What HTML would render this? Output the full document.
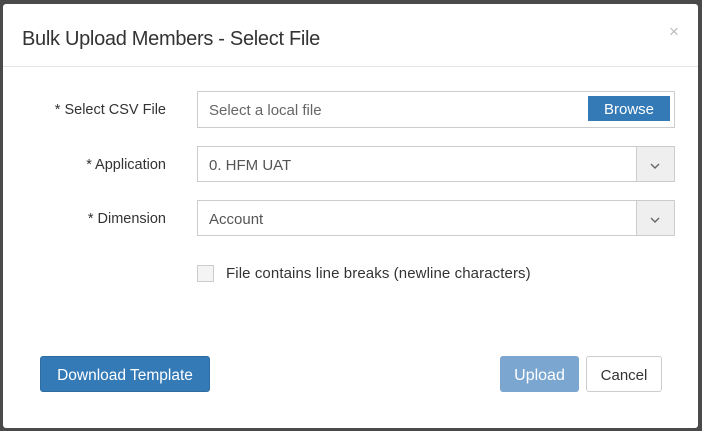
<!DOCTYPE html>
<html><head><style>
body{margin:0;width:702px;height:431px;background:#4a4a4a;position:relative;overflow:hidden;font-family:"Liberation Sans",sans-serif;}
.dlg{position:absolute;left:3px;top:4px;width:695px;height:424px;background:#fff;border-radius:3px;}
.abs{position:absolute;white-space:nowrap;}
.title{left:19px;top:24px;font-size:20px;color:#333;letter-spacing:-0.3px}
.x{left:666px;top:18px;font-size:17px;color:#bbb}
.hr{left:0;top:62px;width:695px;height:1px;background:#e5e5e5}
.lbl{font-size:14.5px;color:#333;text-align:right;width:163px;left:0}
.inp{border:1px solid #ccc;background:#fff;box-sizing:border-box;font-size:15px;color:#555;}
.btn{box-sizing:border-box;font-size:15px;text-align:center;border-radius:3px;}
</style></head><body>
<div class="dlg">
<div class="abs title">Bulk Upload Members - Select File</div>
<div class="abs x">×</div>
<div class="abs hr"></div>
<div class="abs lbl" style="top:98px">* Select CSV File</div>
<div class="abs inp" style="left:194px;top:87px;width:478px;height:37px;padding:10px 11px 0;color:#666">Select a local file</div>
<div class="abs btn" style="left:585px;top:92px;width:82px;height:25px;line-height:27px;background:#337ab7;color:#fff;border-radius:0">Browse</div>
<div class="abs lbl" style="top:153px">* Application</div>
<div class="abs inp" style="left:194px;top:142px;width:478px;height:36px;padding:10px 11px 0">0. HFM UAT</div>
<div class="abs" style="left:633px;top:143px;width:38px;height:34px;background:#efefef;border-left:1px solid #ccc;box-sizing:border-box"></div>
<svg class="abs" style="left:646px;top:158px" width="12" height="8"><path d="M2 2 L6 6 L10 2" stroke="#666" stroke-width="1.4" fill="none"/></svg>
<div class="abs lbl" style="top:207px">* Dimension</div>
<div class="abs inp" style="left:194px;top:196px;width:478px;height:36px;padding:10px 11px 0">Account</div>
<div class="abs" style="left:633px;top:197px;width:38px;height:34px;background:#efefef;border-left:1px solid #ccc;box-sizing:border-box"></div>
<svg class="abs" style="left:646px;top:212px" width="12" height="8"><path d="M2 2 L6 6 L10 2" stroke="#666" stroke-width="1.4" fill="none"/></svg>
<div class="abs" style="left:194px;top:261px;width:17px;height:17px;border:1px solid #ccc;box-sizing:border-box;background:#f4f4f4"></div>
<div class="abs" style="left:223px;top:261px;font-size:15px;color:#333;letter-spacing:0.1px">File contains line breaks (newline characters)</div>
<div class="abs btn" style="left:37px;top:352px;width:170px;height:36px;line-height:37px;background:#337ab7;color:#fff;border:1px solid #2e6da4;font-size:15.5px">Download Template</div>
<div class="abs btn" style="left:497px;top:352px;width:79px;height:36px;line-height:39px;background:#7aa6cf;color:#fff;font-size:16px">Upload</div>
<div class="abs btn" style="left:583px;top:352px;width:76px;height:36px;line-height:37px;background:#fff;color:#333;border:1px solid #ccc">Cancel</div>
</div>
</body></html>
